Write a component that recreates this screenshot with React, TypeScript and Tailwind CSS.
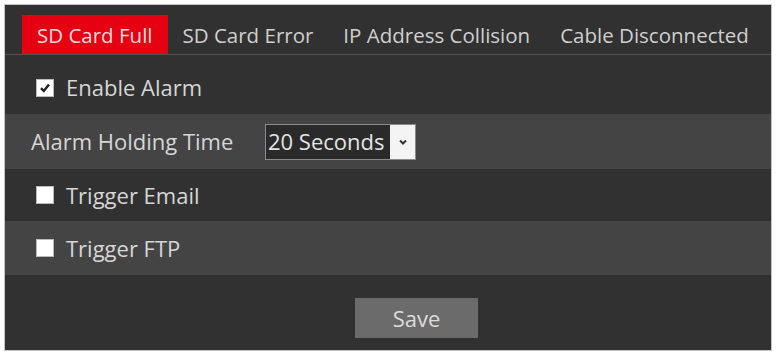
import { useState } from "react";

const tabs = ["SD Card Full", "SD Card Error", "IP Address Collision", "Cable Disconnected"];

function Box({ checked }: { checked?: boolean }) {
  return (
    <span className="flex h-[18px] w-[18px] items-center justify-center border border-[#bbb] bg-white">
      {checked && (
        <svg width="12" height="12" viewBox="0 0 12 12" aria-hidden="true">
          <path d="M2 6.2 L4.8 9 L10 2.6" fill="none" stroke="#222" strokeWidth="2.4" />
        </svg>
      )}
    </span>
  );
}

export default function App() {
  const [active] = useState(0);
  return (
    <div className="h-[354px] w-[776px] bg-white pl-[4px] pt-[4px] font-['Open_Sans',sans-serif]">
      <div className="w-[768px] border border-[#c4c4c4]">
        <div className="flex h-[345px] flex-col bg-[#313131] text-[#d6d6d6]">
          {/* Tabs */}
          <div className="flex h-[50px] items-end border-b border-[#525252] pl-[17px]">
            {tabs.map((t, i) => (
              <div
                key={t}
                className={`flex h-[39px] items-center px-[15px] pt-[2px] text-[20.5px] ${
                  i === active ? "bg-[#e50012] text-[#f6dcdc]" : "text-[#cfcfcf]"
                }`}
              >
                {t}
              </div>
            ))}
          </div>

          {/* Enable Alarm */}
          <div className="flex h-[59px] items-center gap-[12px] pl-[31px] pt-[6px] text-[22px]">
            <Box checked />
            <span>Enable Alarm</span>
          </div>

          {/* Alarm Holding Time */}
          <div className="flex h-[55px] items-center bg-[#444444] pl-[26px] text-[22px]">
            <span className="w-[234px]">Alarm Holding Time</span>
            <div className="flex h-[36px] w-[151px] items-stretch border border-[#8a8a8a] bg-[#2a2a2a]">
              <span className="flex flex-1 items-center pl-[2px] text-[22px] text-[#e4e4e4]">20 Seconds</span>
              <span className="flex w-[25px] items-center justify-center bg-[#f4f4f4]">
                <svg width="10" height="8" viewBox="0 0 10 8" aria-hidden="true">
                  <path d="M2 2.5 L5 5.5 L8 2.5" fill="none" stroke="#333" strokeWidth="2" />
                </svg>
              </span>
            </div>
          </div>

          {/* Trigger Email */}
          <div className="flex h-[52px] items-center gap-[12px] pl-[31px] text-[22px]">
            <Box />
            <span>Trigger Email</span>
          </div>

          {/* Trigger FTP */}
          <div className="flex h-[54px] items-center gap-[12px] bg-[#444444] pl-[31px] text-[22px]">
            <Box />
            <span>Trigger FTP</span>
          </div>

          {/* Save */}
          <div className="flex flex-1 items-start pl-[350px] pt-[23px]">
            <button className="h-[40px] w-[123px] bg-[#6b6b6b] text-[22px] text-[#dcdcdc]">Save</button>
          </div>
        </div>
      </div>
    </div>
  );
}
